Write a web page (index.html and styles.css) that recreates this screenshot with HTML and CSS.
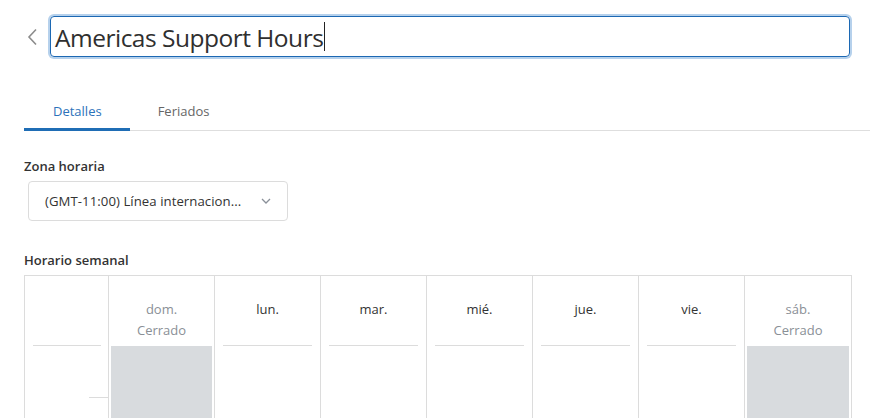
FILE: index.html
```html
<!DOCTYPE html>
<html lang="es">
<head>
<meta charset="utf-8">
<title>Americas Support Hours</title>
<link rel="stylesheet" href="styles.css">
</head>
<body>
<div class="page">
  <div class="title-row">
    <button class="back" aria-label="Atrás">
      <svg width="12" height="18" viewBox="0 0 12 18"><path d="M10 1.5 L3 9 L10 16.5" fill="none" stroke="#8c8c8c" stroke-width="1.6"/></svg>
    </button>
    <div class="title-input"><span class="title-text">Americas Support Hours</span><span class="caret"></span></div>
  </div>

  <div class="tabs">
    <div class="tab active">Detalles</div>
    <div class="tab">Feriados</div>
  </div>

  <div class="field-label">Zona horaria</div>
  <div class="select">
    <span class="select-text">(GMT-11:00) Línea internacion...</span>
    <svg class="select-chev" width="10" height="6" viewBox="0 0 10 6"><path d="M1 1 L5 5 L9 1" fill="none" stroke="#8a9099" stroke-width="1.3"/></svg>
  </div>

  <div class="field-label week-label">Horario semanal</div>
  <div class="week">
    <div class="col time-col">
      <div class="head"></div>
      <div class="body"><div class="tick"></div></div>
    </div>
    <div class="col closed">
      <div class="head"><div>dom.</div><div>Cerrado</div></div>
      <div class="body"><div class="fill"></div></div>
    </div>
    <div class="col">
      <div class="head"><div>lun.</div></div>
      <div class="body"></div>
    </div>
    <div class="col">
      <div class="head"><div>mar.</div></div>
      <div class="body"></div>
    </div>
    <div class="col">
      <div class="head"><div>mié.</div></div>
      <div class="body"></div>
    </div>
    <div class="col">
      <div class="head"><div>jue.</div></div>
      <div class="body"></div>
    </div>
    <div class="col">
      <div class="head"><div>vie.</div></div>
      <div class="body"></div>
    </div>
    <div class="col closed last">
      <div class="head"><div>sáb.</div><div>Cerrado</div></div>
      <div class="body"><div class="fill"></div></div>
    </div>
  </div>
</div>
</body>
</html>
```

FILE: styles.css
```css
* { box-sizing: border-box; }
html, body { margin: 0; padding: 0; background: #fff; }
body {
  font-family: "Open Sans", "Noto Sans", sans-serif;
  color: #333;
  overflow: hidden;
  height: 418px;
}
.page { padding-left: 24px; }

.title-row {
  display: flex;
  align-items: center;
  padding-top: 16px;
  height: 57px;
}
.back {
  width: 26px;
  height: 41px;
  padding: 0 0 0 2px;
  margin: 0;
  border: 0;
  background: none;
  display: flex;
  align-items: center;
}
.title-input {
  width: 800px;
  height: 41px;
  border: 1px solid #1c68b3;
  border-radius: 4px;
  box-shadow: 0 0 0 2px #b6d1ec;
  display: flex;
  align-items: center;
  padding: 3px 0 0 4px;
}
.title-text {
  font-size: 24.5px;
  letter-spacing: -0.5px;
  color: #2f2f2f;
  line-height: 30px;
}
.caret {
  display: inline-block;
  width: 1px;
  height: 29px;
  background: #222;
  margin: -3px 0 0 1px;
}

.tabs {
  margin-top: 36px;
  display: flex;
  border-bottom: 1px solid #dedede;
  height: 38px;
}
.tab {
  padding: 0 28px 0 28px;
  font-size: 13px;
  line-height: 36px;
  color: #666;
  height: 38px;
  margin-bottom: -1px;
}
.tab.active {
  color: #2c72ba;
  border-bottom: 3px solid #1f6db5;
  padding: 0 28px 0 29px;
}

.field-label {
  font-size: 13px;
  font-weight: 600;
  color: #333;
  line-height: 20px;
  margin-top: 25px;
}
.select {
  margin: 5px 0 0 4px;
  width: 260px;
  height: 40px;
  border: 1px solid #dcdcdc;
  border-radius: 4px;
  display: flex;
  align-items: center;
  padding: 0 16px 0 16px;
  justify-content: space-between;
}
.select-text {
  font-size: 13.2px;
  color: #333;
  letter-spacing: 0.05px;
}
.select-chev { margin-right: 0; }
.week-label { margin-top: 29px; }

.week {
  margin-top: 5px;
  width: 828px;
  height: 200px;
  border: 1px solid #dcdcdc;
  border-bottom: 0;
  display: grid;
  grid-template-columns: 84px repeat(7, 1fr);
}
.col {
  border-right: 1px solid #dcdcdc;
  display: flex;
  flex-direction: column;
}
.col.last { border-right: 0; }
.head {
  height: 70px;
  padding-top: 23px;
  margin: 0 8px;
  border-bottom: 1px solid #dcdcdc;
  text-align: center;
  font-size: 13px;
  line-height: 21px;
  color: #333;
}
.closed .head { color: #8a8f96; }
.body { flex: 1; position: relative; }
.closed .body { padding: 0 2px 0 2px; }
.closed .head { margin: 0; border-bottom: 0; height: 70px; }
.fill { background: #d8dbde; height: 100%; }
.time-col .head { margin: 0 7px 0 8px; }
.tick {
  margin: 51px 0 0 auto;
  width: 19px;
  height: 1px;
  background: #dcdcdc;
}
```
